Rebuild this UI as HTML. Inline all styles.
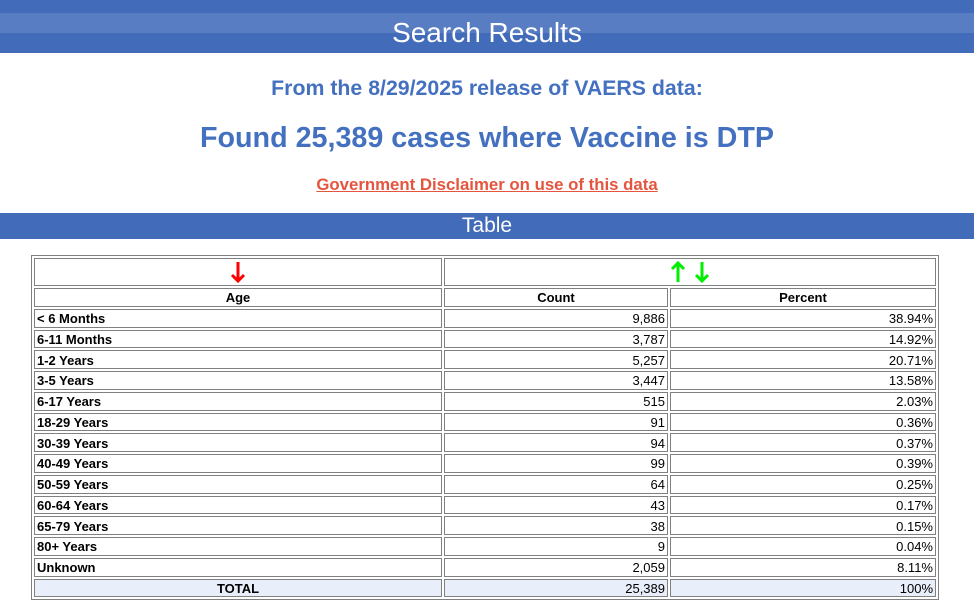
<!DOCTYPE html>
<html><head><meta charset="utf-8"><style>
body{margin:0;width:974px;height:604px;overflow:hidden;background:#fff;font-family:"Liberation Sans",Arial,sans-serif;position:relative}
.hdr{position:absolute;left:0;top:0;width:974px;height:53px;background:#426bb9}
.hdr .band{position:absolute;left:0;top:13px;width:974px;height:20px;background:#587dc3}
.hdr .t{position:absolute;left:0;width:974px;top:17px;text-align:center;color:#fff;font-size:28px;line-height:32px}
.l1{position:absolute;top:76px;width:974px;text-align:center;color:#4470c0;font-weight:bold;font-size:21.3px}
.l2{position:absolute;top:122px;width:974px;text-align:center;color:#4470c0;font-weight:bold;font-size:28.7px}
.l3{position:absolute;top:175px;width:974px;text-align:center;color:#e4553f;font-weight:bold;font-size:16.8px;text-decoration:underline}
.tb{position:absolute;top:213px;left:0;width:974px;height:26px;background:#426bb9;color:#fff;text-align:center;font-size:21px;line-height:26px}
table{position:absolute;left:31px;top:255px;width:908px;border:1px solid #808080;border-spacing:2px;border-collapse:separate;font-size:13px}
td{border:1px solid #808080;padding:1px 2px 0;height:15.75px;line-height:15px;white-space:nowrap;box-sizing:content-box}
td.n{text-align:right}
td.b{font-weight:bold}
tr.h td{font-weight:bold;text-align:center}
tr.a td{height:26px;padding:0;text-align:center;vertical-align:middle}
tr.tot td{background:#e8eefa}
svg{display:inline-block;vertical-align:middle}
</style></head><body>
<div class="hdr"><div class="band"></div><div class="t">Search Results</div></div>
<div class="l1">From the 8/29/2025 release of VAERS data:</div>
<div class="l2">Found 25,389 cases where Vaccine is DTP</div>
<div class="l3">Government Disclaimer on use of this data</div>
<div class="tb">Table</div>
<table>
<tr class="a"><td style="width:406px"><svg width="16" height="24" viewBox="0 0 16 24"><path d="M8 2V21M2 15L8 21L14 15" stroke="#f00" stroke-width="3" fill="none"/></svg></td><td colspan="2"><svg width="16" height="24" viewBox="0 0 16 24"><path d="M8 22V3M2 9L8 3L14 9" stroke="#0e0" stroke-width="3" fill="none"/></svg><span style="display:inline-block;width:8px"></span><svg width="16" height="24" viewBox="0 0 16 24"><path d="M8 2V21M2 15L8 21L14 15" stroke="#0e0" stroke-width="3" fill="none"/></svg></td></tr>
<tr class="h"><td>Age</td><td style="width:218px">Count</td><td>Percent</td></tr>
<tr><td class="b">&lt; 6 Months</td><td class="n">9,886</td><td class="n">38.94%</td></tr>
<tr><td class="b">6-11 Months</td><td class="n">3,787</td><td class="n">14.92%</td></tr>
<tr><td class="b">1-2 Years</td><td class="n">5,257</td><td class="n">20.71%</td></tr>
<tr><td class="b">3-5 Years</td><td class="n">3,447</td><td class="n">13.58%</td></tr>
<tr><td class="b">6-17 Years</td><td class="n">515</td><td class="n">2.03%</td></tr>
<tr><td class="b">18-29 Years</td><td class="n">91</td><td class="n">0.36%</td></tr>
<tr><td class="b">30-39 Years</td><td class="n">94</td><td class="n">0.37%</td></tr>
<tr><td class="b">40-49 Years</td><td class="n">99</td><td class="n">0.39%</td></tr>
<tr><td class="b">50-59 Years</td><td class="n">64</td><td class="n">0.25%</td></tr>
<tr><td class="b">60-64 Years</td><td class="n">43</td><td class="n">0.17%</td></tr>
<tr><td class="b">65-79 Years</td><td class="n">38</td><td class="n">0.15%</td></tr>
<tr><td class="b">80+ Years</td><td class="n">9</td><td class="n">0.04%</td></tr>
<tr><td class="b">Unknown</td><td class="n">2,059</td><td class="n">8.11%</td></tr>
<tr class="tot"><td class="b" style="text-align:center">TOTAL</td><td class="n">25,389</td><td class="n">100%</td></tr>
</table>
</body></html>
